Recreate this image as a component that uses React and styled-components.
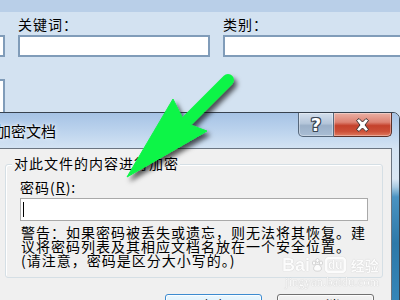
import styled, { createGlobalStyle } from "styled-components";

const GlobalStyle = createGlobalStyle`
  html, body {
    margin: 0;
    padding: 0;
  }
  body {
    width: 400px;
    height: 300px;
    overflow: hidden;
    font-family: "Noto Sans CJK SC", "Liberation Sans", sans-serif;
  }
`;

const Screen = styled.div`
  position: relative;
  width: 400px;
  height: 300px;
  overflow: hidden;
  background: #d3e2f1;
  color: #000;
  font-size: 15px;
`;

// window behind the dialog
const TopStrip = styled.div`
  height: 12px;
  background: #b9cfe8;
`;

const FieldRow = styled.div`
  display: flex;
  align-items: flex-end;
  gap: 13px;
  margin: 4px 0 0 -100px;
`;

const Field = styled.div`
  display: flex;
  flex-direction: column;
  flex: none;
`;

const FieldLabel = styled.div`
  line-height: 17px;
  margin-bottom: 2px;
  font-size: 14px;
  letter-spacing: 1px;
  white-space: nowrap;
`;

const TextBox = styled.div`
  box-sizing: border-box;
  width: ${(p) => p.$w}px;
  height: ${(p) => p.$h || 22}px;
  background: #fff;
  border: 2px solid #809cb9;
`;

const SecondRow = styled.div`
  margin: 22px 0 0 -100px;
`;

// dialog window
const Dialog = styled.div`
  position: absolute;
  top: 112px;
  left: -20px;
  right: 0;
  bottom: -40px;
  display: flex;
  flex-direction: column;
  border: 1px solid #37424f;
  border-radius: 0 7px 0 0;
  overflow: hidden;
  background: linear-gradient(
    to bottom,
    #cfe0f1 0px,
    #d9e7f4 66px,
    #a9cbe2 74px,
    #4a93c2 84px,
    #2d79a9 130px,
    #3586b9 190px
  );
`;

const TitleBar = styled.div`
  display: flex;
  justify-content: space-between;
  height: 35px;
  padding: 0 7px 0 15px;
  background: linear-gradient(to bottom, #a6c3e5 0%, #b9d1ec 45%, #d3e3f3 100%);
`;

const Title = styled.div`
  padding-top: 9px;
  line-height: 17px;
  font-size: 15px;
  color: #000;
  text-shadow: 0 0 6px rgba(255, 255, 255, 0.9), 0 0 3px rgba(255, 255, 255, 0.9);
`;

const CaptionButtons = styled.div`
  display: flex;
  align-self: flex-start;
  height: 24px;
`;

const CaptionButton = styled.div`
  box-sizing: border-box;
  display: flex;
  align-items: center;
  justify-content: center;
  width: ${(p) => (p.$close ? 58 : 36)}px;
  height: 24px;
  border: 1px solid ${(p) => (p.$close ? "#5b3029" : "#56677b")};
  border-top: none;
  border-left-width: ${(p) => (p.$close ? 0 : 1)}px;
  border-radius: ${(p) => (p.$close ? "0 0 5px 0" : "0 0 0 5px")};
  background: ${(p) =>
    p.$close
      ? "linear-gradient(to bottom, #eab0a4 0%, #dd8273 40%, #c4412c 55%, #cc4f37 80%, #e07b60 100%)"
      : "linear-gradient(to bottom, #d3dfed 0%, #b5c6da 45%, #9bb0c8 55%, #a9bdd4 100%)"};
  box-shadow: inset 0 0 0 1px rgba(255, 255, 255, 0.35);
`;

const HelpGlyph = styled.span`
  font-family: "DejaVu Sans", sans-serif;
  font-weight: bold;
  font-size: 18px;
  line-height: 18px;
  color: #fff;
  text-shadow: 1px 0 #3b4654, -1px 0 #3b4654, 0 1px #3b4654, 0 -1px #3b4654,
    1px 1px #3b4654, -1px -1px #3b4654, 1px -1px #3b4654, -1px 1px #3b4654;
`;

const Client = styled.div`
  flex: 1;
  margin: 0 7px;
  padding: 0 8px 0 16px;
  background: #f0f0f0;
  border: 1px solid #6b7581;
  border-bottom: none;
  font-size: 14px;
  letter-spacing: 1px;
`;

const GroupBox = styled.div`
  margin-top: 15px;
  padding: 0 14px 10px 14px;
  border: 1px solid #d5dfe5;
  border-radius: 3px;
  box-shadow: inset 1px 1px 0 #fff;
`;

const Legend = styled.div`
  display: table;
  margin: -10px 0 0 -8px;
  padding: 0 1px 0 2px;
  line-height: 17px;
  background: #f0f0f0;
`;

const FieldCaption = styled.div`
  margin-top: 7px;
  line-height: 17px;
`;

const Mnemonic = styled.span`
  text-decoration: underline;
`;

const PasswordBox = styled.div`
  box-sizing: border-box;
  display: flex;
  align-items: center;
  height: 23px;
  margin-top: 2px;
  padding-left: 2px;
  background: #fff;
  border: 1px solid #a9a9a9;
`;

const Caret = styled.div`
  width: 1px;
  height: 15px;
  background: #000;
`;

const Warning = styled.p`
  margin: 4px 0 0 1px;
  line-height: 14px;
`;

const ButtonRow = styled.div`
  display: flex;
  justify-content: flex-end;
  gap: 15px;
  margin-top: 16px;
  padding-right: 9px;
`;

const DialogButton = styled.div`
  box-sizing: border-box;
  width: 97px;
  height: 23px;
  line-height: 21px;
  text-align: center;
  border: 1px solid ${(p) => (p.$primary ? "#3c8bd0" : "#707070")};
  border-radius: 3px;
  background: ${(p) =>
    p.$primary
      ? "linear-gradient(to bottom, #eaf6fd 0%, #d9f0fc 50%, #bee6fd 51%, #a7d9f5 100%)"
      : "linear-gradient(to bottom, #f2f2f2 0%, #ebebeb 50%, #dddddd 51%, #cfcfcf 100%)"};
  box-shadow: inset 0 0 0 1px rgba(255, 255, 255, 0.8);
`;

// overlays
const Watermark = styled.div`
  position: absolute;
  left: 282px;
  top: 257px;
  display: flex;
  flex-direction: column;
  align-items: flex-start;
  color: #fff;
  opacity: 0.85;
  pointer-events: none;
`;

const Logo = styled.div`
  display: flex;
  align-items: center;
  gap: 1px;
  text-shadow: 0 0 1px rgba(0, 0, 0, 0.3);
`;

const LogoWord = styled.span`
  font-family: "Liberation Sans", sans-serif;
  font-weight: bold;
  font-size: 18px;
  line-height: 16px;
`;

const LogoBox = styled.span`
  font-family: "Liberation Sans", sans-serif;
  font-weight: bold;
  font-size: 12px;
  line-height: 12px;
  padding: 0 1px;
  border: 2px solid #fff;
  border-radius: 4px;
  box-shadow: 0 0 1px rgba(0, 0, 0, 0.3);
`;

const LogoCn = styled.span`
  margin-left: 4px;
  font-weight: bold;
  font-size: 14px;
  line-height: 16px;
`;

const Url = styled.div`
  margin: 3px 0 0 3px;
  font-family: "Liberation Serif", serif;
  font-size: 12px;
  line-height: 12px;
  letter-spacing: 0.3px;
  text-shadow: 0 0 1px rgba(0, 0, 0, 0.35);
`;

const ArrowLayer = styled.svg`
  position: absolute;
  left: 0;
  top: 0;
  pointer-events: none;
`;

const CloseIcon = () => (
  <svg width="15" height="14" viewBox="0 0 15 14">
    <path
      d="M1.5 2.5 L4 0.5 L7.5 4 L11 0.5 L13.5 2.5 L10 7 L13.5 11.5 L11 13.5 L7.5 10 L4 13.5 L1.5 11.5 L5 7 Z"
      fill="#fff"
      stroke="#3a3030"
      strokeWidth="1"
      strokeLinejoin="round"
    />
  </svg>
);

const GreenArrow = () => (
  <ArrowLayer width="400" height="300" viewBox="0 0 400 300">
    <defs>
      <filter id="arrowShadow" x="-30%" y="-30%" width="160%" height="160%">
        <feDropShadow dx="3" dy="4" stdDeviation="2.5" floodColor="#000" floodOpacity="0.65" />
      </filter>
    </defs>
    <g filter="url(#arrowShadow)" fill="#0af547" stroke="#0af547">
      <line x1="228" y1="80" x2="188" y2="120" strokeWidth="12" strokeLinecap="round" />
      <polygon points="127,177 173,99 185,123 207,131" strokeWidth="1" strokeLinejoin="round" />
    </g>
  </ArrowLayer>
);

const Paw = () => (
  <svg width="13" height="14" viewBox="0 0 13 14">
    <g fill="#fff" stroke="rgba(0,0,0,0.25)" strokeWidth="0.6">
      <ellipse cx="3" cy="5" rx="1.6" ry="2" />
      <ellipse cx="6.5" cy="2.5" rx="1.6" ry="2" />
      <ellipse cx="10" cy="5" rx="1.6" ry="2" />
      <path d="M6.5 6.5 C3.5 6.5 2 10 3 12 C4 13.5 9 13.5 10 12 C11 10 9.5 6.5 6.5 6.5 Z" />
    </g>
  </svg>
);

export default function App() {
  return (
    <>
      <GlobalStyle />
      <Screen>
        <TopStrip />
        <FieldRow>
          <Field>
            <TextBox $w={105} />
          </Field>
          <Field>
            <FieldLabel>关键词：</FieldLabel>
            <TextBox $w={192} />
          </Field>
          <Field>
            <FieldLabel>类别：</FieldLabel>
            <TextBox $w={220} />
          </Field>
        </FieldRow>
        <SecondRow>
          <TextBox $w={105} $h={60} />
        </SecondRow>

        <Dialog>
          <TitleBar>
            <Title>加密文档</Title>
            <CaptionButtons>
              <CaptionButton>
                <HelpGlyph>?</HelpGlyph>
              </CaptionButton>
              <CaptionButton $close>
                <CloseIcon />
              </CaptionButton>
            </CaptionButtons>
          </TitleBar>
          <Client>
            <GroupBox>
              <Legend>对此文件的内容进行加密</Legend>
              <FieldCaption>
                密码(<Mnemonic>R</Mnemonic>):
              </FieldCaption>
              <PasswordBox>
                <Caret />
              </PasswordBox>
              <Warning>
                警告：如果密码被丢失或遗忘，则无法将其恢复。建议将密码列表及其相应文档名放在一个安全位置。
                <br />
                (请注意，密码是区分大小写的。)
              </Warning>
            </GroupBox>
            <ButtonRow>
              <DialogButton $primary>确定</DialogButton>
              <DialogButton>取消</DialogButton>
            </ButtonRow>
          </Client>
        </Dialog>

        <Watermark>
          <Logo>
            <LogoWord>Bai</LogoWord>
            <Paw />
            <LogoBox>du</LogoBox>
            <LogoCn>经验</LogoCn>
          </Logo>
          <Url>jingyan.baidu.com</Url>
        </Watermark>

        <GreenArrow />
      </Screen>
    </>
  );
}
